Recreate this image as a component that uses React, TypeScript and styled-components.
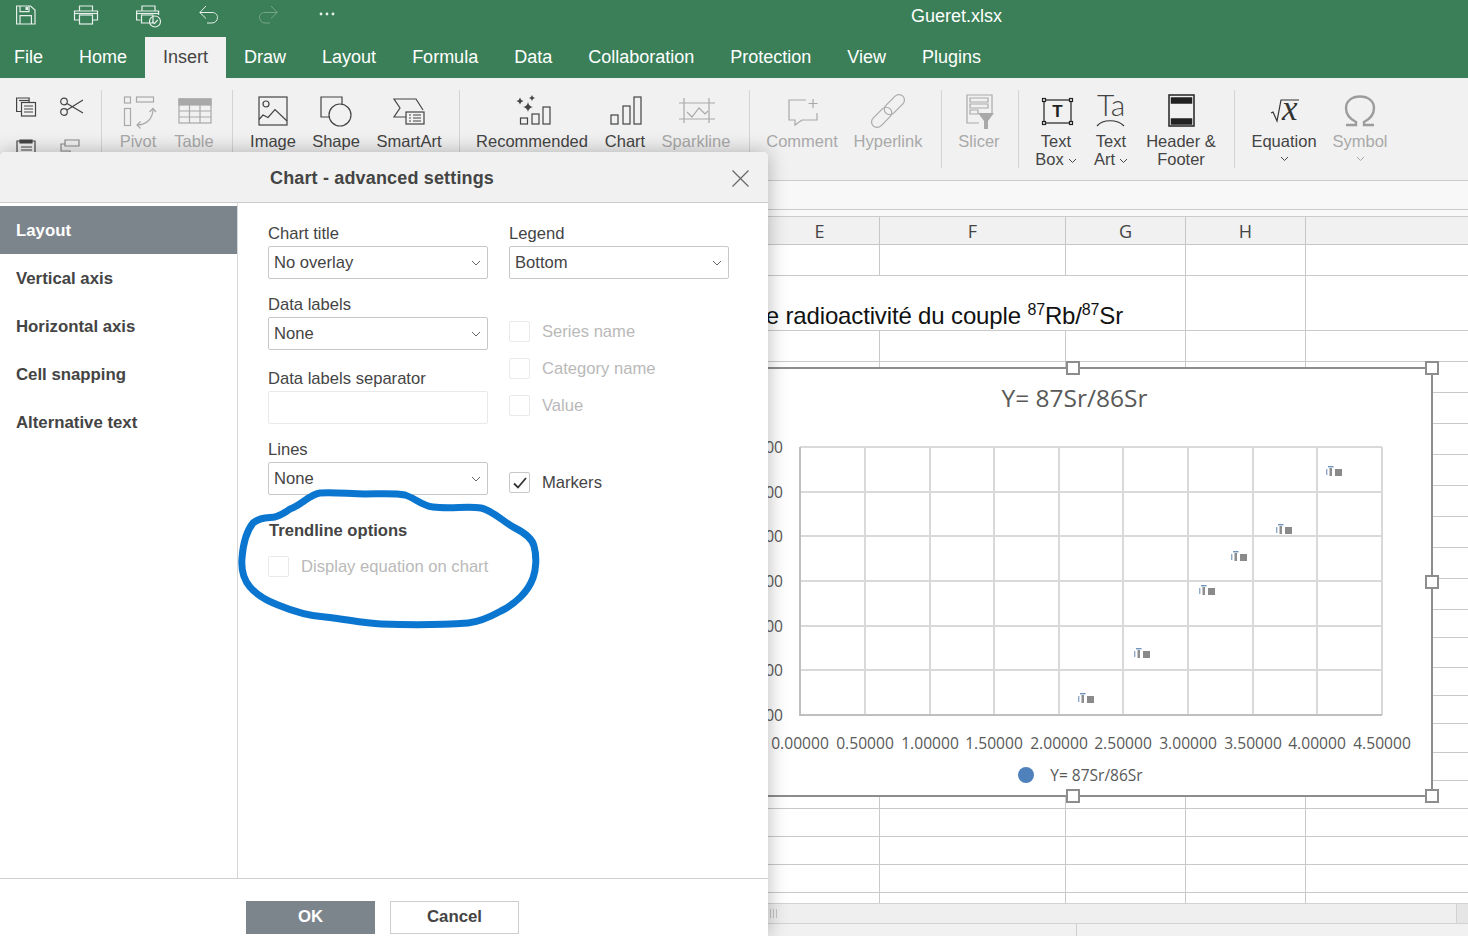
import React from "react";
import styled, { createGlobalStyle } from "styled-components";

const GlobalStyle = createGlobalStyle`
  html, body {
    margin: 0;
    padding: 0;
    background: #fff;
  }
  * {
    box-sizing: border-box;
  }
`;

const Page = styled.div`
  position: relative;
  width: 1468px;
  height: 936px;
  overflow: hidden;
  display: flex;
  flex-direction: column;
  font-family: "Liberation Sans", Arial, sans-serif;
  color: #444;
  background: #fff;
`;

const Glyph = styled.svg`
  display: block;
  overflow: visible;
  flex: none;
  fill: none;
  stroke: currentColor;
  stroke-width: 1.2;
`;

/* ---------- title bar and tabs ---------- */

const Header = styled.header`
  background: #3a7f58;
  color: #fff;
`;

const TitleBar = styled.div`
  height: 37px;
  display: flex;
  align-items: center;
  padding: 0 0 4px 16px;
`;

const QuickActions = styled.div`
  width: 320px;
  display: flex;
  gap: 37px;
  color: #e6efe9;
`;

const QuickAction = styled.span<{ $dim?: boolean }>`
  display: block;
  color: ${(p) => (p.$dim ? "#77a48a" : "inherit")};
`;

const FileName = styled.div`
  margin-left: 575px;
  font-size: 18px;
`;

const Tabs = styled.nav`
  height: 41px;
  display: flex;
`;

const Tab = styled.div<{ $active?: boolean; $first?: boolean }>`
  padding: 0 18px 0 ${(p) => (p.$first ? "14px" : "18px")};
  line-height: 41px;
  font-size: 18px;
  background: ${(p) => (p.$active ? "#f1f1f1" : "transparent")};
  color: ${(p) => (p.$active ? "#444" : "#fff")};
`;

/* ---------- ribbon ---------- */

const Ribbon = styled.div`
  height: 103px;
  display: flex;
  padding-top: 13px;
  background: #f1f1f1;
  border-bottom: 1px solid #cbcbcb;
`;

const Clipboard = styled.div`
  width: 101px;
  height: 60px;
  display: grid;
  grid-template-columns: 20px 24px;
  column-gap: 24px;
  row-gap: 21px;
  padding: 6px 0 0 16px;
  color: #444;
`;

const Separator = styled.div`
  width: 1px;
  height: 78px;
  margin-top: -1px;
  background: #d4d4d4;
`;

const Group = styled.div<{ $right: number }>`
  display: flex;
  padding: 0 ${(p) => p.$right}px 0 8px;
`;

const ToolButton = styled.div<{ $w: number; $off?: boolean }>`
  width: ${(p) => p.$w}px;
  display: flex;
  flex-direction: column;
  align-items: center;
  color: ${(p) => (p.$off ? "#a9a9a9" : "#444")};
`;

const IconSlot = styled.div`
  height: 41px;
`;

const ToolLabel = styled.div`
  font-size: 16.5px;
  line-height: 18px;
  text-align: center;
  white-space: nowrap;
`;

const Caret = styled.svg`
  display: inline-block;
  width: 9px;
  height: 6px;
  margin-left: 4px;
  vertical-align: 1px;
  fill: none;
  stroke: currentColor;
  stroke-width: 1;
`;

const CaretLine = styled.div`
  height: 18px;
  display: flex;
  align-items: center;
  justify-content: center;

  ${Caret} {
    margin-left: 0;
  }
`;

const Down = () => (
  <Caret viewBox="0 0 9 6">
    <path d="M1 1l3.5 3.5L8 1" />
  </Caret>
);

/* ---------- sheet ---------- */

const FormulaBar = styled.div`
  height: 36px;
  flex: none;
  background: #f8f8f8;
  border-bottom: 1px solid #cbcbcb;
`;

const FormulaRule = styled.div`
  height: 29px;
  border-bottom: 1px solid #cbcbcb;
`;

const COLUMNS = "760px 120px 186px 120px 120px 1fr";

const ColumnHeads = styled.div`
  height: 28px;
  flex: none;
  display: grid;
  grid-template-columns: ${COLUMNS};
  background: #f1f1f1;
  border-bottom: 1px solid #c6c6c6;
`;

const ColumnHead = styled.div`
  border-right: 1px solid #c6c6c6;
  text-align: center;
  font-family: "Open Sans", sans-serif;
  font-size: 18px;
  line-height: 28px;
  color: #444;

  &:last-child {
    border-right: 0;
  }
`;

const Sheet = styled.div`
  flex: 1;
  min-height: 0;
  overflow: hidden;
`;

const SheetRow = styled.div<{ $h: number }>`
  height: ${(p) => p.$h}px;
  display: grid;
  grid-template-columns: ${COLUMNS};
  border-bottom: 1px solid #c9c9c9;
`;

const Cell = styled.div`
  border-right: 1px solid #c9c9c9;

  &:last-child {
    border-right: 0;
  }
`;

const MergedCell = styled(Cell)`
  grid-column: span 4;
  display: flex;
  justify-content: flex-end;
  align-items: flex-end;
  padding: 0 62px 0 0;
  font-size: 24px;
  line-height: 28px;
  letter-spacing: -0.15px;
  color: #111;
  white-space: nowrap;

  sup {
    font-size: 16px;
    line-height: 0;
  }
`;

const ScrollTrack = styled.div`
  height: 21px;
  flex: none;
  background: #e5e5e5;
  border-top: 1px solid #d2d2d2;
  border-bottom: 1px solid #d2d2d2;
`;

const ScrollThumb = styled.div`
  width: 1457px;
  height: 100%;
  display: flex;
  align-items: center;
  gap: 2px;
  padding-left: 770px;
  background: #efefef;
  border-right: 1px solid #d2d2d2;
`;

const ScrollGrip = styled.span`
  width: 1px;
  height: 9px;
  background: #c4c4c4;
`;

const StatusBar = styled.div`
  height: 12px;
  flex: none;
  background: #f1f1f1;
`;

const StatusZoom = styled.div`
  width: 1077px;
  height: 100%;
  border-right: 1px solid #cfcfcf;
`;

/* ---------- chart object on the sheet ---------- */

const ChartFrame = styled.div`
  position: absolute;
  left: 716px;
  top: 367px;
  width: 717px;
  height: 430px;
  display: flex;
  flex-direction: column;
  background: #fff;
  border: 2px solid #8d8d8d;
  font-family: "Open Sans", sans-serif;
  color: #595959;
`;

const ChartTitle = styled.div`
  padding-top: 14px;
  height: 44px;
  text-align: center;
  font-size: 24.5px;
  line-height: 30px;
`;

const ChartLegend = styled.div`
  flex: 1;
  display: flex;
  align-items: center;
  justify-content: center;
  gap: 16px;
  padding: 0 0 4px 12px;
  font-size: 15.5px;
`;

const LegendDot = styled.span`
  width: 16px;
  height: 16px;
  border-radius: 50%;
  background: #4f81bd;
`;

const Handle = styled.span<{ $x: number; $y: number }>`
  position: absolute;
  left: ${(p) => p.$x - 7}px;
  top: ${(p) => p.$y - 7}px;
  width: 14px;
  height: 14px;
  background: #fff;
  border: 2px solid #8d8d8d;
`;

const PLOT_X = [800, 865, 930, 994, 1059, 1123, 1188, 1253, 1317, 1382];
const PLOT_Y = [447, 492, 536, 581, 626, 670, 715];
const X_TICKS = ["0.00000", "0.50000", "1.00000", "1.50000", "2.00000", "2.50000", "3.00000", "3.50000", "4.00000", "4.50000"];
const Y_TICKS = ["0.76000", "0.75000", "0.74000", "0.73000", "0.72000", "0.71000", "0.70000"];
const POINTS = [
  [1078, 693],
  [1134, 648],
  [1199, 585],
  [1231, 551],
  [1276, 524],
  [1326, 466],
];

const Plot = () => (
  <svg width={713} height={345} viewBox="718 413 713 345" style={{ display: "block", overflow: "visible" }}>
    {PLOT_X.map((x) => (
      <line key={x} x1={x} x2={x} y1={447} y2={715} stroke="#d9d9d9" strokeWidth={2} />
    ))}
    {PLOT_Y.map((y) => (
      <line key={y} x1={800} x2={1382} y1={y} y2={y} stroke="#d9d9d9" strokeWidth={2} />
    ))}
    <path d="M800 447V715H1382" fill="none" stroke="#bfbfbf" strokeWidth={2} />
    {X_TICKS.map((t, i) => (
      <text key={t} x={PLOT_X[i]} y={749} textAnchor="middle" fontSize={15.6} fill="#595959">
        {t}
      </text>
    ))}
    {Y_TICKS.map((t, i) => (
      <text key={t} x={783} y={PLOT_Y[i] + 6} textAnchor="end" fontSize={15.6} fill="#595959">
        {t}
      </text>
    ))}
    {POINTS.map(([x, y]) => (
      <g key={x} transform={`translate(${x} ${y})`}>
        <path d="M.7 3v6" stroke="#8fabc9" strokeWidth={1.4} />
        <path d="M2 .7h5.500" stroke="#6f93bb" strokeWidth={1.4} />
        <rect x={3.500} y={2} width={2.500} height={8} fill="#8e8e8e" />
        <rect x={9} y={3} width={7} height={7} fill="#8a8a8a" />
      </g>
    ))}
  </svg>
);

/* ---------- dialog ---------- */

const Dialog = styled.section`
  position: absolute;
  left: 0;
  top: 152px;
  width: 768px;
  height: 784px;
  display: flex;
  flex-direction: column;
  background: #fff;
  border-radius: 5px 5px 0 0;
  box-shadow: 0 0 20px rgba(0, 0, 0, 0.28);
`;

const DialogHead = styled.div`
  height: 51px;
  flex: none;
  display: grid;
  grid-template-columns: 1fr auto 1fr;
  align-items: center;
  padding: 3px 4px 0 0;
  background: #f1f1f1;
  border-bottom: 1px solid #cbcbcb;
  border-radius: 5px 5px 0 0;
`;

const DialogTitle = styled.h2`
  grid-column: 2;
  margin: 0;
  font-size: 18px;
  font-weight: 700;
  letter-spacing: 0.16px;
  color: #444;
`;

const CloseButton = styled.span`
  justify-self: end;
  margin: 0 15px 0 0;
  color: #666;
`;

const DialogBody = styled.div`
  flex: 1;
  min-height: 0;
  display: flex;
`;

const SideNav = styled.aside`
  width: 238px;
  padding-top: 3px;
  border-right: 1px solid #d6d6d6;
`;

const NavItem = styled.div<{ $active?: boolean }>`
  height: 48px;
  padding-left: 16px;
  font-size: 16.8px;
  font-weight: 700;
  line-height: 50px;
  background: ${(p) => (p.$active ? "#7d858c" : "transparent")};
  color: ${(p) => (p.$active ? "#fff" : "#444")};
`;

const FormPane = styled.div`
  padding: 21px 0 0 30px;
  display: grid;
  grid-template-columns: 220px 220px;
  column-gap: 21px;
  align-content: start;
  font-size: 16.6px;
`;

const FormColumn = styled.div`
  display: flex;
  flex-direction: column;
`;

const Field = styled.div<{ $top?: number }>`
  margin-top: ${(p) => p.$top || 0}px;
`;

const FieldLabel = styled.div`
  height: 22px;
  line-height: 20px;
  color: #444;
`;

const SelectBox = styled.div<{ $off?: boolean }>`
  height: 33px;
  display: flex;
  align-items: center;
  justify-content: space-between;
  padding: 0 6px 0 5px;
  background: #fff;
  border: 1px solid ${(p) => (p.$off ? "#e9e9e9" : "#c8c8c8")};
  border-radius: 2px;
  color: #444;
`;

const CheckRow = styled.div<{ $top?: number; $off?: boolean }>`
  margin-top: ${(p) => p.$top || 0}px;
  display: flex;
  align-items: center;
  gap: 12px;
  height: 21px;
  white-space: nowrap;
  color: ${(p) => (p.$off ? "#b9b9b9" : "#444")};
`;

const CheckText = styled.span`
  padding-top: 1px;
`;

const CheckBox = styled.span<{ $off?: boolean }>`
  width: 21px;
  height: 21px;
  flex: none;
  display: flex;
  align-items: center;
  justify-content: center;
  border: 1px solid ${(p) => (p.$off ? "#e9e9e9" : "#c8c8c8")};
  border-radius: 2px;
  color: #333;
`;

const SectionTitle = styled.div`
  margin: 26px 0 0 1px;
  height: 35px;
  font-weight: 700;
  line-height: 20px;
  color: #444;
`;

const DialogFoot = styled.div`
  height: 58px;
  flex: none;
  display: flex;
  gap: 15px;
  padding: 22px 0 0 246px;
  border-top: 1px solid #d0d0d0;
`;

const FootButton = styled.div<{ $primary?: boolean }>`
  width: 129px;
  height: 33px;
  text-align: center;
  font-size: 16.8px;
  font-weight: 700;
  line-height: 29px;
  background: ${(p) => (p.$primary ? "#7d858c" : "#fff")};
  border: 1px solid ${(p) => (p.$primary ? "#7d858c" : "#cfcfcf")};
  color: ${(p) => (p.$primary ? "#fff" : "#444")};
`;

const Scribble = styled.svg`
  position: absolute;
  left: 0;
  top: 0;
  width: 1468px;
  height: 936px;
  pointer-events: none;
  fill: none;
  stroke: #0a76d0;
  stroke-width: 7;
  stroke-linejoin: round;
  stroke-linecap: round;
`;

/* ---------- icons ---------- */

const SmallChevron = () => (
  <Glyph width={10} height={6} viewBox="0 0 10 6" style={{ strokeWidth: 1, color: "#666" }}>
    <path d="M1 1l4 4 4-4" />
  </Glyph>
);

const Sparkle = ({ x, y, r }: { x: number; y: number; r: number }) => (
  <path
    d={`M${x} ${y - r}Q${x + r * 0.15} ${y - r * 0.15} ${x + r} ${y}Q${x + r * 0.15} ${y + r * 0.15} ${x} ${y + r}Q${x - r * 0.15} ${y + r * 0.15} ${x - r} ${y}Q${x - r * 0.15} ${y - r * 0.15} ${x} ${y - r}Z`}
    fill="currentColor"
    stroke="none"
  />
);

const icons = {
  save: (
    <Glyph width={20} height={20} viewBox="0 0 20 20">
      <path d="M.6 1h14l4.400 4v14H.6z" />
      <path d="M4 1v5.600h9V1M4 19v-8.400h11.400V19" />
      <rect x={9.500} y={2} width={2.500} height={3} fill="currentColor" stroke="none" />
    </Glyph>
  ),
  print: (
    <Glyph width={26} height={20} viewBox="0 0 26 20">
      <path d="M6.500 6V1h13v5M6.500 15H1.500V6h23v9h-5" />
      <rect x={6.500} y={10} width={13} height={9} />
      <path d="M1.500 8.500h23" />
    </Glyph>
  ),
  printCheck: (
    <Glyph width={26} height={24} viewBox="0 0 26 24">
      <path d="M6 6V1h13v5M4.500 15H.6V6h22v4" />
      <path d="M5.500 10h11.500v8H5.500z" />
      <path d="M.6 8.500h22" />
      <circle cx={19} cy={16.500} r={5.500} />
      <path d="M16.400 16.600l2 2 3.300-3.600" />
    </Glyph>
  ),
  undo: (
    <Glyph width={23} height={20} viewBox="0 0 23 20" style={{ strokeWidth: 1 }}>
      <path d="M7 1L.8 7.500 7 13.500M.8 7.500h12.200c4 0 5.500 2.500 5.500 5s-1.800 5.500-5.500 5.500H8" />
    </Glyph>
  ),
  redo: (
    <Glyph width={23} height={20} viewBox="0 0 23 20" style={{ strokeWidth: 1 }}>
      <path d="M12 1l6.200 6.500L12 13.500M18.200 7.500H6C2 7.500.5 10 .5 12.500S2.300 18 6 18h5" />
    </Glyph>
  ),
  dots: (
    <Glyph width={16} height={20} viewBox="0 0 16 20">
      <g fill="currentColor" stroke="none">
        <circle cx={2} cy={9} r={1.400} />
        <circle cx={8} cy={9} r={1.400} />
        <circle cx={14} cy={9} r={1.400} />
      </g>
    </Glyph>
  ),
  copy: (
    <Glyph width={20} height={20} viewBox="0 0 20 20">
      <path d="M5 14.500H.6V1h12.500v4.500" />
      <path d="M3 3.500h10" />
      <rect x={5.500} y={5.500} width={14} height={13.500} />
      <path d="M8 9h9M8 12h9M8 15h9" />
    </Glyph>
  ),
  scissors: (
    <Glyph width={24} height={20} viewBox="0 0 24 20">
      <circle cx={4} cy={4.500} r={3.300} />
      <circle cx={4} cy={15} r={3.300} />
      <path d="M7 6.500L23 16M7 13L23 3" />
    </Glyph>
  ),
  paste: (
    <Glyph width={20} height={20} viewBox="0 0 20 20">
      <path d="M1 3h18v18H1z" />
      <path d="M4 2h12v3H4z" fill="currentColor" />
      <path d="M5 9h11M5 12h11M5 15h11" />
    </Glyph>
  ),
  painter: (
    <Glyph width={20} height={20} viewBox="0 0 20 20" style={{ color: "#8a8a8a" }}>
      <path d="M5 2h14v6H5z" />
      <path d="M5 6H1v7h9v3" />
    </Glyph>
  ),
  pivot: (
    <Glyph width={36} height={41} viewBox="0 0 36 41">
      <rect x={4.500} y={6} width={6} height={6} />
      <rect x={16.500} y={6} width={17} height={5} />
      <rect x={4.500} y={17.500} width={6} height={17} />
      <path d="M17 34c9 0 16-6 16-16M29.500 21L33 17.500 36 21M20.500 30.500L17 34l3.500 3.500" />
    </Glyph>
  ),
  table: (
    <Glyph width={36} height={41} viewBox="0 0 36 41">
      <rect x={3} y={8} width={32} height={24} />
      <rect x={3} y={8} width={32} height={6} fill="currentColor" />
      <path d="M3 20h32M3 26h32M13.500 14v18M24 14v18" />
    </Glyph>
  ),
  image: (
    <Glyph width={32} height={41} viewBox="0 0 32 41">
      <rect x={2} y={6} width={28} height={28} />
      <circle cx={9} cy={13} r={3} />
      <path d="M2 28.500L6 24l5 2.500 7-8L30 30" />
    </Glyph>
  ),
  shape: (
    <Glyph width={36} height={41} viewBox="0 0 36 41">
      <path d="M12 26H3V6h21v8" />
      <circle cx={22} cy={24} r={11} />
    </Glyph>
  ),
  smartArt: (
    <Glyph width={36} height={41} viewBox="0 0 36 41">
      <path d="M15 26H3l6-9-6-9h22l7 11" />
      <rect x={15} y={21} width={18} height={12} fill="#f1f1f1" />
      <path d="M18 24h2M22 24h8M18 27h2M22 27h8M18 30h2M22 30h8" />
    </Glyph>
  ),
  recommended: (
    <Glyph width={36} height={41} viewBox="0 0 36 41">
      <Sparkle x={14} y={16} r={5} />
      <Sparkle x={6} y={10} r={3.500} />
      <Sparkle x={18} y={7} r={3} />
      <rect x={6.500} y={27} width={7} height={6} />
      <rect x={18} y={23} width={7} height={10} />
      <rect x={29} y={16} width={7} height={17} />
    </Glyph>
  ),
  chart: (
    <Glyph width={34} height={41} viewBox="0 0 34 41">
      <rect x={3} y={24} width={7} height={9} />
      <rect x={15} y={15} width={7} height={18} />
      <rect x={26} y={6} width={7} height={27} />
    </Glyph>
  ),
  sparkline: (
    <Glyph width={36} height={41} viewBox="0 0 36 41">
      <path d="M1 12h36M1 28h36M6 7v25M31 7v25" />
      <path d="M9 21l5 5 7-9 6 6 3-3" />
    </Glyph>
  ),
  comment: (
    <Glyph width={32} height={41} viewBox="0 0 32 41">
      <path d="M20 9H3v20h6v5l7-5h15v-7" />
      <path d="M27 8v9M22.500 12.500h9" />
    </Glyph>
  ),
  hyperlink: (
    <Glyph width={36} height={41} viewBox="0 0 36 41">
      <g transform="rotate(-45 18 20)">
        <rect x={-3} y={14.500} width={24} height={11} rx={5.500} />
        <rect x={15} y={14.500} width={24} height={11} rx={5.500} />
      </g>
    </Glyph>
  ),
  slicer: (
    <Glyph width={36} height={41} viewBox="0 0 36 41">
      <path d="M18 32H6V4h25v18" />
      <path d="M9 7h18v4H9zM9 13h18v4H9zM9 19h8v4H9z" />
      <path d="M17 22h16l-6 8v8h-4v-8z" fill="currentColor" stroke="none" />
    </Glyph>
  ),
  textBox: (
    <Glyph width={36} height={41} viewBox="0 0 36 41" style={{ color: "#222" }}>
      <rect x={6} y={9} width={27} height={23} />
      <g fill="#f1f1f1">
        <rect x={4.500} y={7.500} width={3} height={3} />
        <rect x={31.500} y={7.500} width={3} height={3} />
        <rect x={4.500} y={30.500} width={3} height={3} />
        <rect x={31.500} y={30.500} width={3} height={3} />
      </g>
      <text x={19.500} y={26} textAnchor="middle" fontFamily="Liberation Sans" fontWeight={700} fontSize={17} fill="currentColor" stroke="none">
        T
      </text>
    </Glyph>
  ),
  textArt: (
    <Glyph width={36} height={41} viewBox="0 0 36 41" style={{ color: "#333" }}>
      <text x={4} y={25} fontFamily="Lato" fontWeight={300} fontSize={30} fill="#444" stroke="none">
        Ta
      </text>
      <path d="M4 35c6-7 20-7 27 0" />
    </Glyph>
  ),
  headerFooter: (
    <Glyph width={36} height={41} viewBox="0 0 36 41" style={{ color: "#222", strokeWidth: 1.5 }}>
      <rect x={6} y={4} width={25} height={31} />
      <rect x={8.500} y={7} width={20} height={5} fill="currentColor" />
      <rect x={8.500} y={28} width={20} height={5} fill="currentColor" />
    </Glyph>
  ),
  equation: (
    <Glyph width={36} height={41} viewBox="0 0 36 41" style={{ color: "#333" }}>
      <path d="M5 22l2-1 4 9 4-21h18" />
      <text x={16} y={29} fontFamily="Liberation Serif" fontStyle="italic" fontSize={35} fill="currentColor" stroke="none">
        x
      </text>
    </Glyph>
  ),
  symbol: (
    <Glyph width={36} height={41} viewBox="0 0 36 41" style={{ color: "#9c9c9c", strokeWidth: 2.4 }}>
      <path d="M4 34h10v-3C8 28 4 23 4 17 4 10 10 5.500 18 5.500S32 10 32 17c0 6-4 11-10 14v3h10" />
    </Glyph>
  ),
};

const tabs = ["File", "Home", "Insert", "Draw", "Layout", "Formula", "Data", "Collaboration", "Protection", "View", "Plugins"];
const navItems = ["Layout", "Vertical axis", "Horizontal axis", "Cell snapping", "Alternative text"];
const rowHeights = [31, 55, 31, ...Array(8).fill(31), 28, 30, 28, 28, 29, 28, 28, 28, 28, 28, 28];

const App = () => {
  return (
    <>
      <GlobalStyle />
      <Page>
        <Header>
          <TitleBar>
            <QuickActions>
              <QuickAction>{icons.save}</QuickAction>
              <QuickAction>{icons.print}</QuickAction>
              <QuickAction>{icons.printCheck}</QuickAction>
              <QuickAction>{icons.undo}</QuickAction>
              <QuickAction $dim>{icons.redo}</QuickAction>
              <QuickAction>{icons.dots}</QuickAction>
            </QuickActions>
            <FileName>Gueret.xlsx</FileName>
          </TitleBar>
          <Tabs>
            {tabs.map((t, i) => (
              <Tab key={t} $first={i === 0} $active={t === "Insert"}>
                {t}
              </Tab>
            ))}
          </Tabs>
        </Header>

        <Ribbon>
          <Clipboard>
            {icons.copy}
            {icons.scissors}
            {icons.paste}
            {icons.painter}
          </Clipboard>
          <Separator />
          <Group $right={10}>
            <ToolButton $w={56} $off>
              <IconSlot>{icons.pivot}</IconSlot>
              <ToolLabel>Pivot</ToolLabel>
            </ToolButton>
            <ToolButton $w={56} $off>
              <IconSlot>{icons.table}</IconSlot>
              <ToolLabel>Table</ToolLabel>
            </ToolButton>
          </Group>
          <Separator />
          <Group $right={8}>
            <ToolButton $w={64}>
              <IconSlot>{icons.image}</IconSlot>
              <ToolLabel>Image</ToolLabel>
            </ToolButton>
            <ToolButton $w={62}>
              <IconSlot>{icons.shape}</IconSlot>
              <ToolLabel>Shape</ToolLabel>
            </ToolButton>
            <ToolButton $w={84}>
              <IconSlot>{icons.smartArt}</IconSlot>
              <ToolLabel>SmartArt</ToolLabel>
            </ToolButton>
          </Group>
          <Separator />
          <Group $right={11}>
            <ToolButton $w={128}>
              <IconSlot>{icons.recommended}</IconSlot>
              <ToolLabel>Recommended</ToolLabel>
            </ToolButton>
            <ToolButton $w={58}>
              <IconSlot>{icons.chart}</IconSlot>
              <ToolLabel>Chart</ToolLabel>
            </ToolButton>
            <ToolButton $w={84} $off>
              <IconSlot>{icons.sparkline}</IconSlot>
              <ToolLabel>Sparkline</ToolLabel>
            </ToolButton>
          </Group>
          <Separator />
          <Group $right={11}>
            <ToolButton $w={88} $off>
              <IconSlot>{icons.comment}</IconSlot>
              <ToolLabel>Comment</ToolLabel>
            </ToolButton>
            <ToolButton $w={84} $off>
              <IconSlot>{icons.hyperlink}</IconSlot>
              <ToolLabel>Hyperlink</ToolLabel>
            </ToolButton>
          </Group>
          <Separator />
          <Group $right={10}>
            <ToolButton $w={58} $off>
              <IconSlot>{icons.slicer}</IconSlot>
              <ToolLabel>Slicer</ToolLabel>
            </ToolButton>
          </Group>
          <Separator />
          <Group $right={9}>
            <ToolButton $w={58}>
              <IconSlot>{icons.textBox}</IconSlot>
              <ToolLabel>
                Text
                <br />
                Box
                <Down />
              </ToolLabel>
            </ToolButton>
            <ToolButton $w={52}>
              <IconSlot>{icons.textArt}</IconSlot>
              <ToolLabel>
                Text
                <br />
                Art
                <Down />
              </ToolLabel>
            </ToolButton>
            <ToolButton $w={88}>
              <IconSlot>{icons.headerFooter}</IconSlot>
              <ToolLabel>
                Header &amp;
                <br />
                Footer
              </ToolLabel>
            </ToolButton>
          </Group>
          <Separator />
          <Group $right={8}>
            <ToolButton $w={82}>
              <IconSlot>{icons.equation}</IconSlot>
              <ToolLabel>Equation</ToolLabel>
              <CaretLine>
                <Down />
              </CaretLine>
            </ToolButton>
            <ToolButton $w={70} $off>
              <IconSlot>{icons.symbol}</IconSlot>
              <ToolLabel>Symbol</ToolLabel>
              <CaretLine>
                <Down />
              </CaretLine>
            </ToolButton>
          </Group>
        </Ribbon>

        <FormulaBar>
          <FormulaRule />
        </FormulaBar>
        <ColumnHeads>
          {["D", "E", "F", "G", "H", ""].map((c) => (
            <ColumnHead key={c}>{c}</ColumnHead>
          ))}
        </ColumnHeads>
        <Sheet>
          {rowHeights.map((h, r) =>
            r === 1 ? (
              <SheetRow key={r} $h={h}>
                <MergedCell>
                  <span>
                    de radioactivité du couple <sup>87</sup>Rb/<sup>87</sup>Sr
                  </span>
                </MergedCell>
                <Cell />
                <Cell />
              </SheetRow>
            ) : (
              <SheetRow key={r} $h={h}>
                <Cell />
                <Cell />
                <Cell />
                <Cell />
                <Cell />
                <Cell />
              </SheetRow>
            )
          )}
        </Sheet>
        <ScrollTrack>
          <ScrollThumb>
            <ScrollGrip />
            <ScrollGrip />
            <ScrollGrip />
          </ScrollThumb>
        </ScrollTrack>
        <StatusBar>
          <StatusZoom />
        </StatusBar>

        <ChartFrame>
          <ChartTitle>Y= 87Sr/86Sr</ChartTitle>
          <Plot />
          <ChartLegend>
            <LegendDot />
            Y= 87Sr/86Sr
          </ChartLegend>
        </ChartFrame>
        <Handle $x={1073} $y={368} />
        <Handle $x={1432} $y={368} />
        <Handle $x={1432} $y={582} />
        <Handle $x={1073} $y={796} />
        <Handle $x={1432} $y={796} />

        <Dialog>
          <DialogHead>
            <DialogTitle>Chart - advanced settings</DialogTitle>
            <CloseButton>
              <Glyph width={17} height={17} viewBox="0 0 17 17">
                <path d="M.5.5l16 16M16.500.5l-16 16" />
              </Glyph>
            </CloseButton>
          </DialogHead>
          <DialogBody>
            <SideNav>
              {navItems.map((n, i) => (
                <NavItem key={n} $active={i === 0}>
                  {n}
                </NavItem>
              ))}
            </SideNav>
            <FormPane>
              <FormColumn>
                <Field>
                  <FieldLabel>Chart title</FieldLabel>
                  <SelectBox>
                    No overlay
                    <SmallChevron />
                  </SelectBox>
                </Field>
                <Field $top={16}>
                  <FieldLabel>Data labels</FieldLabel>
                  <SelectBox>
                    None
                    <SmallChevron />
                  </SelectBox>
                </Field>
                <Field $top={19}>
                  <FieldLabel>Data labels separator</FieldLabel>
                  <SelectBox $off />
                </Field>
                <Field $top={16}>
                  <FieldLabel>Lines</FieldLabel>
                  <SelectBox>
                    None
                    <SmallChevron />
                  </SelectBox>
                </Field>
                <SectionTitle>Trendline options</SectionTitle>
                <CheckRow $off>
                  <CheckBox $off />
                  <CheckText>Display equation on chart</CheckText>
                </CheckRow>
              </FormColumn>
              <FormColumn>
                <Field>
                  <FieldLabel>Legend</FieldLabel>
                  <SelectBox>
                    Bottom
                    <SmallChevron />
                  </SelectBox>
                </Field>
                <CheckRow $off $top={42}>
                  <CheckBox $off />
                  <CheckText>Series name</CheckText>
                </CheckRow>
                <CheckRow $off $top={16}>
                  <CheckBox $off />
                  <CheckText>Category name</CheckText>
                </CheckRow>
                <CheckRow $off $top={16}>
                  <CheckBox $off />
                  <CheckText>Value</CheckText>
                </CheckRow>
                <CheckRow $top={56}>
                  <CheckBox>
                    <Glyph width={14} height={12} viewBox="0 0 14 12" style={{ strokeWidth: 1.8 }}>
                      <path d="M1 6.500l4 4L13 1" />
                    </Glyph>
                  </CheckBox>
                  <CheckText>Markers</CheckText>
                </CheckRow>
              </FormColumn>
            </FormPane>
          </DialogBody>
          <DialogFoot>
            <FootButton $primary>OK</FootButton>
            <FootButton>Cancel</FootButton>
          </DialogFoot>
        </Dialog>

        <Scribble viewBox="0 0 1468 936">
          <path d="M290 509C300 506 310 494 320 493C335 492 350 494 365 494C380 494 395 493 405 495C415 498 422 506 433 507C450 509 468 506 481 508C494 511 503 522 515 528C525 533 532 538 534 546C537 557 536 570 533 578C528 592 515 604 501 611C490 617 480 622 468 623C440 625 410 625 381 624C362 623 345 619 325 617C308 616 290 610 278 605C265 600 256 594 250 587C243 579 241 570 242 558C243 545 245 533 253 523C260 517 268 518 275 517C282 515 286 512 290 509Z" />
        </Scribble>
      </Page>
    </>
  );
};

export default App;
